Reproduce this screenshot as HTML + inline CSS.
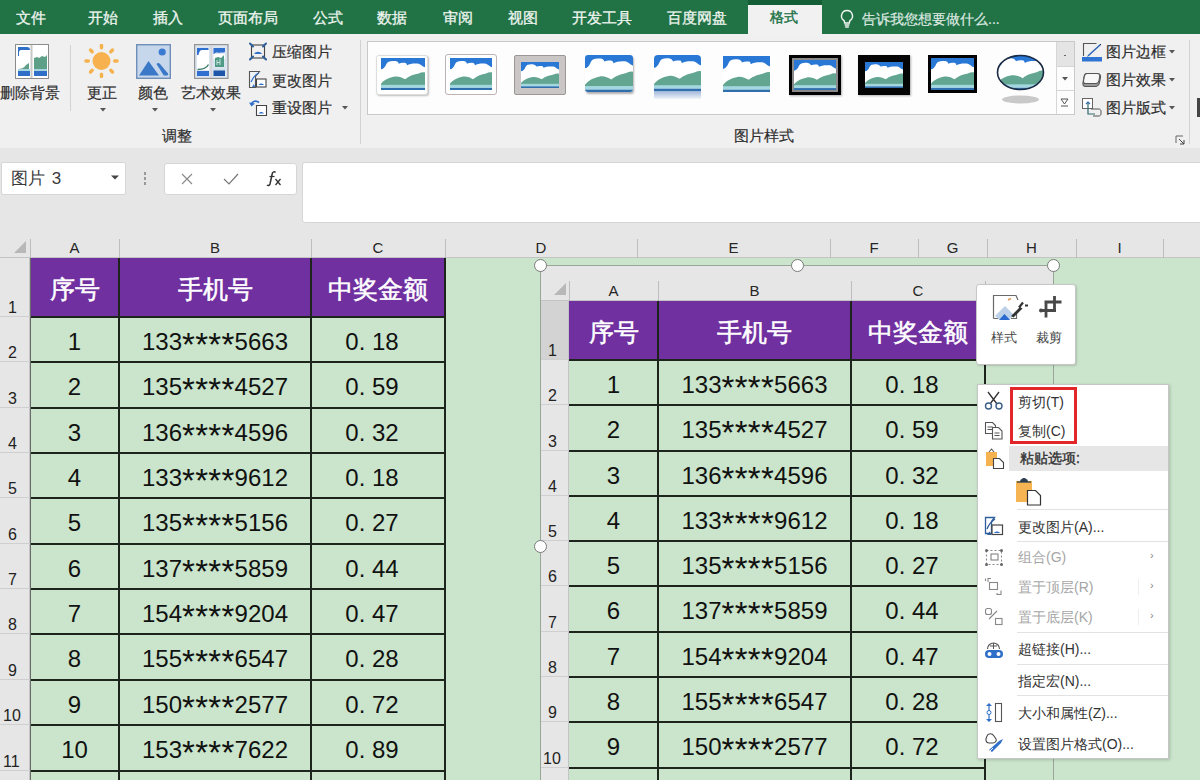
<!DOCTYPE html><html><head><meta charset="utf-8"><style>
*{box-sizing:border-box;margin:0;padding:0}
html,body{width:1200px;height:780px;overflow:hidden;background:#cae5cb;font-family:"Liberation Sans",sans-serif;position:relative}
.a{position:absolute}
.t{position:absolute;white-space:nowrap;line-height:1}
.tab{position:absolute;top:10px;font-size:14.5px;-webkit-text-stroke:0.3px #eef5ef;color:#eef5ef;line-height:16px;white-space:nowrap}
.rl{position:absolute;font-size:14.5px;color:#2e2e2e;-webkit-text-stroke:0.2px #2e2e2e;line-height:16px;white-space:nowrap}
.vsep{position:absolute;width:1px;background:#d2d2d2}
.ch{position:absolute;height:21px;font-size:15px;color:#262626;text-align:center;line-height:21px}
.chs{position:absolute;width:1px;background:#bdbdbd}
.rn{position:absolute;font-size:16px;color:#222;line-height:16px}
.hl{position:absolute;background:#1c241c}
.hc{position:absolute;color:#fff;font-size:25px;-webkit-text-stroke:0.5px #fff;text-align:center;white-space:nowrap}
.dc{position:absolute;color:#111;font-size:24px;text-align:center;white-space:nowrap}
.mi{position:absolute;left:1018px;font-size:14px;color:#333;line-height:16px;white-space:nowrap}
.dis{color:#a6a6a6}
.ast{font-size:33px;vertical-align:-6px;letter-spacing:0.3px;line-height:0}
</style></head><body>
<div class="a" style="left:0;top:0;width:1200px;height:34px;background:#217346"></div>
<div class="tab" style="left:16px">文件</div>
<div class="tab" style="left:88px">开始</div>
<div class="tab" style="left:153px">插入</div>
<div class="tab" style="left:218px">页面布局</div>
<div class="tab" style="left:313px">公式</div>
<div class="tab" style="left:377px">数据</div>
<div class="tab" style="left:443px">审阅</div>
<div class="tab" style="left:508px">视图</div>
<div class="tab" style="left:572px">开发工具</div>
<div class="tab" style="left:667px">百度网盘</div>
<div class="a" style="left:748px;top:0;width:74px;height:5px;background:#145e35"></div>
<div class="a" style="left:748px;top:5px;width:74px;height:29px;background:#f1f1f1"></div>
<div class="tab" style="left:770px;top:9px;font-size:14px;color:#217346;-webkit-text-stroke:0.4px #217346">格式</div>
<svg class="a" style="left:838px;top:9px" width="18" height="20" viewBox="0 0 18 20"><path d="M9 1.5a5.5 5.5 0 0 0-3.3 9.9c.6.5.9 1.2.9 2V14h4.8v-.6c0-.8.3-1.5.9-2A5.5 5.5 0 0 0 9 1.5z" fill="none" stroke="#f2f6f2" stroke-width="1.4"/><path d="M6.6 16h4.8M7.2 18h3.6" stroke="#f2f6f2" stroke-width="1.4"/></svg>
<div class="tab" style="left:862px;font-size:14px;top:11px;color:#dde9e0;-webkit-text-stroke:0.2px #dde9e0">告诉我您想要做什么...</div>
<div class="a" style="left:0;top:34px;width:1200px;height:115px;background:#f0f0f1;border-bottom:1px solid #d8d8d8"></div>
<svg class="a" style="left:15px;top:44px" width="34" height="35" viewBox="0 0 34 35"><rect x=".5" y=".5" width="33" height="34" fill="#fff" stroke="#8c8c8c"/><rect x="15.5" y="1" width="2" height="33" fill="#c8c8c8"/><path d="M3 3h9c2 0 3 1 3 3v0H6c-1 0-2 1-2 2v4H3z" fill="#2f6fc8"/><path d="M3 25c3 0 6-1 8-4l3-2v6H3z" fill="#5e9f88"/><rect x="3" y="25" width="12" height="2" fill="#a8d4e0"/><rect x="3" y="27" width="12" height="5" fill="#2f6fc8"/><path d="M19 14l3-1 2 1 3-2 3 1 2-2v14H19z" fill="#5e9f88"/><rect x="19" y="25" width="13" height="2" fill="#a8d4e0"/><rect x="19" y="27" width="13" height="5" fill="#2f6fc8"/></svg>
<div class="rl" style="left:-2px;top:85px;width:64px;text-align:center">删除背景</div>
<div class="vsep" style="left:70px;top:45px;height:66px"></div>
<svg class="a" style="left:84px;top:44px" width="36" height="36" viewBox="0 0 36 36"><circle cx="17.5" cy="17" r="9" fill="#f7b14f"/><path d="M30.7 17.0L33.1 17.0" stroke="#f5b24c" stroke-width="3.4" stroke-linecap="round"/><path d="M26.8 26.3L28.5 28.0" stroke="#f5b24c" stroke-width="3.4" stroke-linecap="round"/><path d="M17.5 30.2L17.5 32.6" stroke="#f5b24c" stroke-width="3.4" stroke-linecap="round"/><path d="M8.2 26.3L6.5 28.0" stroke="#f5b24c" stroke-width="3.4" stroke-linecap="round"/><path d="M4.3 17.0L1.9 17.0" stroke="#f5b24c" stroke-width="3.4" stroke-linecap="round"/><path d="M8.2 7.7L6.5 6.0" stroke="#f5b24c" stroke-width="3.4" stroke-linecap="round"/><path d="M17.5 3.8L17.5 1.4" stroke="#f5b24c" stroke-width="3.4" stroke-linecap="round"/><path d="M26.8 7.7L28.5 6.0" stroke="#f5b24c" stroke-width="3.4" stroke-linecap="round"/></svg>
<div class="rl" style="left:82px;top:85px;width:40px;text-align:center">更正</div>
<svg class="a" style="left:100px;top:108px" width="7" height="4"><path d="M0 0h6l-3 3.5z" fill="#555"/></svg>
<svg class="a" style="left:136px;top:44px" width="35" height="35" viewBox="0 0 35 35"><rect x=".7" y=".7" width="33.6" height="33.6" fill="#c6d7ec" stroke="#6f8fba" stroke-width="1.4"/><circle cx="26.2" cy="8" r="3.6" fill="#3a7ad0"/><path d="M3 31.5L12.5 17 23 31.5z" fill="#3a78c8"/><path d="M20.5 20c1-1.3 2.3-1.3 3.3-.3l8 9.5c.8 1 .4 2.3-1 2.3h-3z" fill="#3a78c8"/></svg>
<div class="rl" style="left:133px;top:85px;width:40px;text-align:center">颜色</div>
<svg class="a" style="left:152px;top:108px" width="7" height="4"><path d="M0 0h6l-3 3.5z" fill="#555"/></svg>
<svg class="a" style="left:194px;top:44px" width="35" height="35" viewBox="0 0 35 35"><rect x=".6" y=".6" width="33.4" height="33.8" fill="#dbe5f0" stroke="#939393" stroke-width="1.2"/><rect x="16.3" y="1" width="2" height="33" fill="#d3d3d8"/><rect x="3" y="4" width="12" height="22" fill="#fff"/><path d="M3 4h11.5v2H8C6 6 5 8 4.5 11H3z" fill="#2e6fd0"/><path d="M3.5 25.5c5 0 9-1 11-5" fill="none" stroke="#3f7f70" stroke-width="1.4"/><rect x="3" y="27" width="12" height="5" fill="#2f6fd0"/><path d="M19.5 4h11.5v4c-2 1-4 0-6 1-2-1-4 0-5.5 1z" fill="#2f6fd0"/><rect x="19.5" y="10" width="11.5" height="5" fill="#fff"/><path d="M21 14l3-1 3 1 3-3v12H21z" fill="#4f9a86"/><path d="M23 16v5M26 15v6M23 18.5h3" stroke="#c8e6dc" stroke-width="1"/><rect x="19.5" y="24.5" width="11.5" height="2" fill="#cfe0ea"/><rect x="19.5" y="26.5" width="11.5" height="5.5" fill="#1d55a8"/></svg>
<div class="rl" style="left:179px;top:85px;width:64px;text-align:center">艺术效果</div>
<svg class="a" style="left:210px;top:108px" width="7" height="4"><path d="M0 0h6l-3 3.5z" fill="#555"/></svg>
<div class="rl" style="left:157px;top:128px;width:40px;text-align:center">调整</div>
<svg class="a" style="left:248px;top:42px" width="20" height="19" viewBox="0 0 20 19"><rect x="3.5" y="3" width="13" height="13" fill="none" stroke="#444" stroke-width="1.1"/><path d="M2 1.5l3 3M18 1.5l-3 3M2 17.5l3-3M18 17.5l-3-3" stroke="#2f5f9a" stroke-width="2" stroke-linecap="round"/><path d="M6 12c2-3 6-3 8 0z" fill="#2f6fc8"/></svg>
<div class="rl" style="left:272px;top:44px;">压缩图片</div>
<svg class="a" style="left:248px;top:70px" width="20" height="19" viewBox="0 0 20 19"><path d="M1.5 1.5h10l-4 5v11h-6z" fill="#eef3f8" stroke="#555" stroke-width="1.1"/><path d="M3 12c2-5 5-8 8-9" fill="none" stroke="#2f6fc8" stroke-width="1.2"/><rect x="8.5" y="9" width="9.5" height="8" fill="#fff" stroke="#444" stroke-width="1.1"/><path d="M10.5 15c1.5-2 4-2 5.5 0z" fill="#2f6fc8"/><path d="M4 17l2-3 1 3z" fill="#2f6fc8"/></svg>
<div class="rl" style="left:272px;top:73px;">更改图片</div>
<svg class="a" style="left:248px;top:99px" width="20" height="18" viewBox="0 0 20 18"><path d="M8.5 6.5h10v10h-10z" fill="#fff" stroke="#444" stroke-width="1.1"/><path d="M10.5 14.5c1.5-2 4-2 5.5 0z" fill="#2f6fc8"/><path d="M11 3.5C8 1 4.5 2 3 5.5" fill="none" stroke="#2f6fc8" stroke-width="1.8"/><path d="M1 3.5l2.5 4 3.5-3z" fill="#2f6fc8"/></svg>
<div class="rl" style="left:272px;top:100px;">重设图片</div>
<svg class="a" style="left:342px;top:106px" width="7" height="4"><path d="M0 0h6l-3 3.5z" fill="#555"/></svg>
<div class="vsep" style="left:360px;top:40px;height:104px"></div>
<div class="a" style="left:367px;top:41px;width:708px;height:74px;background:#fdfdfd;border:1px solid #c9c9c9"></div>
<div class="a" style="left:1056px;top:42px;width:18px;height:24px;background:#e4e4e4;border-left:1px solid #d6d6d6"></div>
<div class="a" style="left:1056px;top:66px;width:18px;height:48px;border-left:1px solid #d6d6d6;border-top:1px solid #d6d6d6"></div>
<div class="a" style="left:1056px;top:90px;width:18px;height:1px;background:#d6d6d6"></div>
<div class="a" style="left:1064px;top:55px;width:2px;height:1px;background:#666"></div>
<svg class="a" style="left:1062px;top:77px" width="7" height="4"><path d="M0 0h6l-3 3.5z" fill="#555"/></svg>
<svg class="a" style="left:1060px;top:98px" width="10" height="9"><path d="M1 1h7l-3.5 5z" fill="none" stroke="#555"/><path d="M1 8h7" stroke="#555"/></svg>
<svg width="0" height="0" style="position:absolute"><defs><symbol id="pic" viewBox="0 0 42 31" preserveAspectRatio="none"><rect width="42" height="31" fill="#fff"/><rect width="42" height="11" fill="#2a78d6"/><path d="M0 11.5C2 10.5 4 9 5 6 6 3 10 2.5 14 3c2 .5 2.5 1.5 3 2.5 2-1 5-1 7-.5l1 2c2-1.5 7-2 11-1.5 2 .5 3 2.5 6 3.5V20H0z" fill="#fff"/><path d="M0 25c3-4 8-6 13-7 4-.5 7 1 10 2.5 4-3.5 9-4.5 13-5.5 2-1 4-1.5 6-1V27H0z" fill="#62a590"/><rect y="26" width="42" height="3" fill="#a3d7e0"/><rect y="29" width="42" height="2" fill="#2f6fae"/></symbol></defs></svg>
<div class="a" style="left:376px;top:55px;width:52px;height:40px;background:#fff;border:1px solid #ddd;border-radius:3px;box-shadow:1px 1px 2px rgba(0,0,0,.25)"></div>
<svg class="a" style="left:381px;top:58px;" width="44" height="32"><use href="#pic" width="44" height="32"/></svg>
<div class="a" style="left:445px;top:54px;width:52px;height:41px;background:#fff;border:1px solid #bdb3b3;border-radius:3px"></div>
<svg class="a" style="left:450px;top:58px;" width="42" height="32"><use href="#pic" width="42" height="32"/></svg>
<div class="a" style="left:514px;top:55px;width:52px;height:40px;background:#cbc6c6;border:1px solid #9c9696;border-radius:2px"></div>
<svg class="a" style="left:521px;top:62px;" width="38" height="26"><use href="#pic" width="38" height="26"/></svg>
<svg class="a" style="left:585px;top:55px;border-radius:3px;box-shadow:1px 2px 2px rgba(0,0,0,.3)" width="48" height="37"><use href="#pic" width="48" height="37"/></svg>
<svg class="a" style="left:654px;top:55px;border-radius:4px 4px 0 0" width="47" height="36"><use href="#pic" width="47" height="36"/></svg>
<div class="a" style="left:654px;top:91px;width:47px;height:8px;background:linear-gradient(#9fb6da,#f0f3f8)"></div>
<svg class="a" style="left:723px;top:56px" width="47" height="36"><use href="#pic" width="47" height="36"/></svg>
<div class="a" style="left:789px;top:55px;width:52px;height:40px;background:#000;box-shadow:1px 1px 2px rgba(0,0,0,.3)"></div>
<div class="a" style="left:792px;top:58px;width:46px;height:34px;background:#8a8a8a"></div>
<svg class="a" style="left:794px;top:60px;" width="42" height="30"><use href="#pic" width="42" height="30"/></svg>
<div class="a" style="left:858px;top:55px;width:52px;height:40px;background:#050505;box-shadow:1px 1px 2px rgba(0,0,0,.3)"></div>
<svg class="a" style="left:865px;top:62px;" width="38" height="26"><use href="#pic" width="38" height="26"/></svg>
<div class="a" style="left:928px;top:55px;width:49px;height:38px;background:#000"></div>
<svg class="a" style="left:931px;top:58px;" width="43" height="32"><use href="#pic" width="43" height="32"/></svg>
<svg class="a" style="left:996px;top:54px" width="50" height="51" viewBox="0 0 50 51"><defs><clipPath id="ov"><ellipse cx="24.5" cy="18.5" rx="23" ry="17"/></clipPath></defs><g clip-path="url(#ov)"><use href="#pic" x="1" y="1" width="47" height="35"/></g><ellipse cx="24.5" cy="18.5" rx="23" ry="17" fill="none" stroke="#1b2a44" stroke-width="1.6"/><ellipse cx="24.5" cy="45.5" rx="18.5" ry="4" fill="#c9c9c9"/></svg>
<div class="rl" style="left:729px;top:128px;width:70px;text-align:center">图片样式</div>
<svg class="a" style="left:1082px;top:42px" width="21" height="20" viewBox="0 0 21 20"><path d="M1.5 14V1.5h13" fill="none" stroke="#555" stroke-width="1.1"/><path d="M18 2L6 13l-1 2 2-1L19 3z" fill="#2a64b5"/><path d="M18 2l1 1" stroke="#333"/><rect x="0" y="15" width="20" height="4.5" fill="#2f74d0"/></svg>
<div class="rl" style="left:1106px;top:44px;">图片边框</div>
<svg class="a" style="left:1169px;top:50px" width="7" height="4"><path d="M0 0h6l-3 3.5z" fill="#555"/></svg>
<svg class="a" style="left:1082px;top:72px" width="20" height="16" viewBox="0 0 20 16"><path d="M5 1.5h10c2.5 0 4 1.5 3.5 4l-1 5c-.5 2.5-2 4-4.5 4H3.5C1.5 14.5.5 13 1 11l1-6C2.5 2.5 3.5 1.5 5 1.5z" fill="#9a9a9a" stroke="#555" stroke-width="1.1"/><path d="M5 1.5h10c2 0 3 1 2.7 3l-.7 4c-.3 2-1.5 3-3.5 3H3.5c-1.5 0-2.2-1-2-2.5l.8-4.5C2.6 2.5 3.5 1.5 5 1.5z" fill="#f8f8f8" stroke="#555" stroke-width="1.1"/></svg>
<div class="rl" style="left:1106px;top:72px;">图片效果</div>
<svg class="a" style="left:1169px;top:78px" width="7" height="4"><path d="M0 0h6l-3 3.5z" fill="#555"/></svg>
<svg class="a" style="left:1082px;top:98px" width="20" height="19" viewBox="0 0 20 19"><rect x=".5" y=".5" width="10" height="10" fill="#fff" stroke="#666"/><path d="M4 6l2-2 2 2" fill="none" stroke="#2f6fc8" stroke-width="1.2"/><path d="M6 4v12h7" fill="none" stroke="#2f6a6a" stroke-width="1.2"/><path d="M9 11h8c1 0 2 1 2 2v3c0 1-1 2-2 2h-6" fill="none" stroke="#555"/></svg>
<div class="rl" style="left:1106px;top:100px;">图片版式</div>
<svg class="a" style="left:1169px;top:106px" width="7" height="4"><path d="M0 0h6l-3 3.5z" fill="#555"/></svg>
<svg class="a" style="left:1175px;top:135px" width="10" height="10"><path d="M1 8V1h7" fill="none" stroke="#666"/><path d="M4 4l5 5M9 5v4H5" fill="none" stroke="#444"/></svg>
<div class="vsep" style="left:1189px;top:40px;height:104px"></div>
<div class="a" style="left:1197px;top:98px;width:3px;height:19px;background:#444"></div>
<div class="a" style="left:0;top:148px;width:1200px;height:89px;background:#e6e6e6"></div>
<div class="a" style="left:1px;top:162px;width:125px;height:33px;background:#fff;border:1px solid #d6d6d6;border-radius:2px"></div>
<div class="t" style="left:11px;top:170px;font-size:17px;color:#3a3a3a;word-spacing:2px">图片 3</div>
<svg class="a" style="left:111px;top:175px" width="9" height="6"><path d="M0 .5h8L4 4.5z" fill="#444"/></svg>
<div class="a" style="left:144px;top:172px;width:2px;height:3px;background:#999"></div><div class="a" style="left:144px;top:177px;width:2px;height:3px;background:#999"></div><div class="a" style="left:144px;top:182px;width:2px;height:3px;background:#999"></div>
<div class="a" style="left:164px;top:163px;width:133px;height:32px;background:#fff;border:1px solid #d6d6d6;border-radius:3px"></div>
<svg class="a" style="left:179px;top:171px" width="16" height="16"><path d="M3 3l10 10M13 3L3 13" stroke="#888" stroke-width="1.1"/></svg>
<svg class="a" style="left:222px;top:171px" width="18" height="16"><path d="M2 8l5 5L16 3" fill="none" stroke="#777" stroke-width="1.2"/></svg>
<svg class="a" style="left:266px;top:170px" width="18" height="17" viewBox="0 0 18 17"><path d="M9.5 2.5c-1-1.2-2.8-.8-3.2 1L4 14c-.4 1.6-2 2-3 1" fill="none" stroke="#333" stroke-width="1.5"/><path d="M3.5 6.5h5" stroke="#333" stroke-width="1.2"/><path d="M9.5 9l5 6M14.5 9l-5 6" stroke="#333" stroke-width="1.3"/></svg>
<div class="a" style="left:302px;top:162px;width:903px;height:61px;background:#fff;border:1px solid #d6d6d6;border-radius:3px"></div>
<div class="a" style="left:0;top:237px;width:1200px;height:21px;background:#e6e6e6;border-bottom:1px solid #c4c4c4"></div>
<svg class="a" style="left:13px;top:240px" width="14" height="14"><path d="M13 1V13H1z" fill="#b8b8b8"/></svg>
<div class="chs" style="left:30px;top:239px;height:19px"></div>
<div class="ch" style="left:30px;top:237px;width:89px">A</div>
<div class="chs" style="left:119px;top:239px;height:19px"></div>
<div class="ch" style="left:119px;top:237px;width:192px">B</div>
<div class="chs" style="left:311px;top:239px;height:19px"></div>
<div class="ch" style="left:311px;top:237px;width:134px">C</div>
<div class="chs" style="left:445px;top:239px;height:19px"></div>
<div class="ch" style="left:445px;top:237px;width:192px">D</div>
<div class="chs" style="left:637px;top:239px;height:19px"></div>
<div class="ch" style="left:637px;top:237px;width:193px">E</div>
<div class="chs" style="left:830px;top:239px;height:19px"></div>
<div class="ch" style="left:830px;top:237px;width:88px">F</div>
<div class="chs" style="left:918px;top:239px;height:19px"></div>
<div class="ch" style="left:918px;top:237px;width:69px">G</div>
<div class="chs" style="left:987px;top:239px;height:19px"></div>
<div class="ch" style="left:987px;top:237px;width:89px">H</div>
<div class="chs" style="left:1076px;top:239px;height:19px"></div>
<div class="ch" style="left:1076px;top:237px;width:87px">I</div>
<div class="chs" style="left:1163px;top:239px;height:19px"></div>
<div class="a" style="left:0;top:258px;width:30px;height:522px;background:#e6e6e6;border-right:1px solid #c4c4c4"></div>
<div class="a" style="left:0;top:316px;width:30px;height:1px;background:#cfcfcf"></div>
<div class="rn" style="left:8px;top:300px">1</div>
<div class="a" style="left:0;top:361px;width:30px;height:1px;background:#cfcfcf"></div>
<div class="rn" style="left:8px;top:345px">2</div>
<div class="a" style="left:0;top:407px;width:30px;height:1px;background:#cfcfcf"></div>
<div class="rn" style="left:8px;top:391px">3</div>
<div class="a" style="left:0;top:452px;width:30px;height:1px;background:#cfcfcf"></div>
<div class="rn" style="left:8px;top:436px">4</div>
<div class="a" style="left:0;top:497px;width:30px;height:1px;background:#cfcfcf"></div>
<div class="rn" style="left:8px;top:481px">5</div>
<div class="a" style="left:0;top:543px;width:30px;height:1px;background:#cfcfcf"></div>
<div class="rn" style="left:8px;top:527px">6</div>
<div class="a" style="left:0;top:588px;width:30px;height:1px;background:#cfcfcf"></div>
<div class="rn" style="left:8px;top:572px">7</div>
<div class="a" style="left:0;top:633px;width:30px;height:1px;background:#cfcfcf"></div>
<div class="rn" style="left:8px;top:617px">8</div>
<div class="a" style="left:0;top:679px;width:30px;height:1px;background:#cfcfcf"></div>
<div class="rn" style="left:8px;top:663px">9</div>
<div class="a" style="left:0;top:724px;width:30px;height:1px;background:#cfcfcf"></div>
<div class="rn" style="left:3px;top:708px">10</div>
<div class="a" style="left:0;top:770px;width:30px;height:1px;background:#cfcfcf"></div>
<div class="rn" style="left:3px;top:754px">11</div>
<div class="a" style="left:0;top:815px;width:30px;height:1px;background:#cfcfcf"></div>
<div class="rn" style="left:3px;top:799px">12</div>
<div class="a" style="left:30px;top:258px;width:415px;height:59px;background:#7030a0"></div>
<div class="hc" style="left:30px;top:261px;width:89px;height:56px;line-height:56px">序号</div>
<div class="hc" style="left:119px;top:261px;width:192px;height:56px;line-height:56px">手机号</div>
<div class="hc" style="left:311px;top:261px;width:134px;height:56px;line-height:56px">中奖金额</div>
<div class="dc" style="left:30px;top:318px;width:89px;height:45px;line-height:47px">1</div>
<div class="dc" style="left:119px;top:318px;width:192px;height:45px;line-height:47px">133<span class="ast">****</span>5663</div>
<div class="dc" style="left:305px;top:318px;width:134px;height:45px;line-height:47px">0. 18</div>
<div class="dc" style="left:30px;top:363px;width:89px;height:46px;line-height:48px">2</div>
<div class="dc" style="left:119px;top:363px;width:192px;height:46px;line-height:48px">135<span class="ast">****</span>4527</div>
<div class="dc" style="left:305px;top:363px;width:134px;height:46px;line-height:48px">0. 59</div>
<div class="dc" style="left:30px;top:409px;width:89px;height:45px;line-height:47px">3</div>
<div class="dc" style="left:119px;top:409px;width:192px;height:45px;line-height:47px">136<span class="ast">****</span>4596</div>
<div class="dc" style="left:305px;top:409px;width:134px;height:45px;line-height:47px">0. 32</div>
<div class="dc" style="left:30px;top:454px;width:89px;height:45px;line-height:47px">4</div>
<div class="dc" style="left:119px;top:454px;width:192px;height:45px;line-height:47px">133<span class="ast">****</span>9612</div>
<div class="dc" style="left:305px;top:454px;width:134px;height:45px;line-height:47px">0. 18</div>
<div class="dc" style="left:30px;top:499px;width:89px;height:46px;line-height:48px">5</div>
<div class="dc" style="left:119px;top:499px;width:192px;height:46px;line-height:48px">135<span class="ast">****</span>5156</div>
<div class="dc" style="left:305px;top:499px;width:134px;height:46px;line-height:48px">0. 27</div>
<div class="dc" style="left:30px;top:545px;width:89px;height:45px;line-height:47px">6</div>
<div class="dc" style="left:119px;top:545px;width:192px;height:45px;line-height:47px">137<span class="ast">****</span>5859</div>
<div class="dc" style="left:305px;top:545px;width:134px;height:45px;line-height:47px">0. 44</div>
<div class="dc" style="left:30px;top:590px;width:89px;height:45px;line-height:47px">7</div>
<div class="dc" style="left:119px;top:590px;width:192px;height:45px;line-height:47px">154<span class="ast">****</span>9204</div>
<div class="dc" style="left:305px;top:590px;width:134px;height:45px;line-height:47px">0. 47</div>
<div class="dc" style="left:30px;top:635px;width:89px;height:46px;line-height:48px">8</div>
<div class="dc" style="left:119px;top:635px;width:192px;height:46px;line-height:48px">155<span class="ast">****</span>6547</div>
<div class="dc" style="left:305px;top:635px;width:134px;height:46px;line-height:48px">0. 28</div>
<div class="dc" style="left:30px;top:681px;width:89px;height:45px;line-height:47px">9</div>
<div class="dc" style="left:119px;top:681px;width:192px;height:45px;line-height:47px">150<span class="ast">****</span>2577</div>
<div class="dc" style="left:305px;top:681px;width:134px;height:45px;line-height:47px">0. 72</div>
<div class="dc" style="left:30px;top:726px;width:89px;height:46px;line-height:48px">10</div>
<div class="dc" style="left:119px;top:726px;width:192px;height:46px;line-height:48px">153<span class="ast">****</span>7622</div>
<div class="dc" style="left:305px;top:726px;width:134px;height:46px;line-height:48px">0. 89</div>
<div class="dc" style="left:30px;top:772px;width:89px;height:45px;line-height:47px"></div>
<div class="dc" style="left:119px;top:772px;width:192px;height:45px;line-height:47px"></div>
<div class="dc" style="left:305px;top:772px;width:134px;height:45px;line-height:47px"></div>
<div class="hl" style="left:30px;top:316px;width:416px;height:2px"></div>
<div class="hl" style="left:30px;top:361px;width:416px;height:2px"></div>
<div class="hl" style="left:30px;top:407px;width:416px;height:2px"></div>
<div class="hl" style="left:30px;top:452px;width:416px;height:2px"></div>
<div class="hl" style="left:30px;top:497px;width:416px;height:2px"></div>
<div class="hl" style="left:30px;top:543px;width:416px;height:2px"></div>
<div class="hl" style="left:30px;top:588px;width:416px;height:2px"></div>
<div class="hl" style="left:30px;top:633px;width:416px;height:2px"></div>
<div class="hl" style="left:30px;top:679px;width:416px;height:2px"></div>
<div class="hl" style="left:30px;top:724px;width:416px;height:2px"></div>
<div class="hl" style="left:30px;top:770px;width:416px;height:2px"></div>
<div class="hl" style="left:30px;top:815px;width:416px;height:2px"></div>
<div class="hl" style="left:118px;top:258px;width:2px;height:522px"></div>
<div class="hl" style="left:310px;top:258px;width:2px;height:522px"></div>
<div class="hl" style="left:444px;top:258px;width:2px;height:522px"></div>
<div class="a" style="left:30px;top:258px;width:1px;height:522px;background:#6a6a6a"></div>
<div class="a" style="left:540px;top:265px;width:514px;height:520px;background:#cae5cb;overflow:hidden;border-left:1px solid #9aa59a;border-top:1px solid #9aa59a;border-right:1px solid #9aa59a">
<div class="a" style="left:0;top:0;width:512px;height:35px;background:#e6e6e6;border-bottom:1px solid #c4c4c4"></div>
<svg class="a" style="left:12px;top:16px" width="14" height="14"><path d="M13 1V13H1z" fill="#b8b8b8"/></svg>
<div class="chs" style="left:28px;top:15px;height:20px"></div>
<div class="ch" style="left:28px;top:14px;width:89px">A</div>
<div class="chs" style="left:117px;top:15px;height:20px"></div>
<div class="ch" style="left:117px;top:14px;width:193px">B</div>
<div class="chs" style="left:310px;top:15px;height:20px"></div>
<div class="ch" style="left:310px;top:14px;width:134px">C</div>
<div class="chs" style="left:444px;top:15px;height:20px"></div>
<div class="a" style="left:0;top:35px;width:28px;height:500px;background:#e6e6e6;border-right:1px solid #c4c4c4"></div>
<div class="a" style="left:0;top:35px;width:27px;height:59px;background:#d3d3d3"></div>
<div class="a" style="left:0;top:93px;width:28px;height:1px;background:#cfcfcf"></div>
<div class="rn" style="left:7px;top:77px">1</div>
<div class="a" style="left:0;top:138px;width:28px;height:1px;background:#cfcfcf"></div>
<div class="rn" style="left:7px;top:122px">2</div>
<div class="a" style="left:0;top:184px;width:28px;height:1px;background:#cfcfcf"></div>
<div class="rn" style="left:7px;top:168px">3</div>
<div class="a" style="left:0;top:229px;width:28px;height:1px;background:#cfcfcf"></div>
<div class="rn" style="left:7px;top:213px">4</div>
<div class="a" style="left:0;top:274px;width:28px;height:1px;background:#cfcfcf"></div>
<div class="rn" style="left:7px;top:258px">5</div>
<div class="a" style="left:0;top:319px;width:28px;height:1px;background:#cfcfcf"></div>
<div class="rn" style="left:7px;top:303px">6</div>
<div class="a" style="left:0;top:365px;width:28px;height:1px;background:#cfcfcf"></div>
<div class="rn" style="left:7px;top:349px">7</div>
<div class="a" style="left:0;top:410px;width:28px;height:1px;background:#cfcfcf"></div>
<div class="rn" style="left:7px;top:394px">8</div>
<div class="a" style="left:0;top:455px;width:28px;height:1px;background:#cfcfcf"></div>
<div class="rn" style="left:7px;top:439px">9</div>
<div class="a" style="left:0;top:501px;width:28px;height:1px;background:#cfcfcf"></div>
<div class="rn" style="left:2px;top:485px">10</div>
<div class="a" style="left:0;top:546px;width:28px;height:1px;background:#cfcfcf"></div>
<div class="rn" style="left:2px;top:530px">11</div>
<div class="a" style="left:28px;top:35px;width:416px;height:59px;background:#7030a0"></div>
<div class="hc" style="left:28px;top:38px;width:89px;height:56px;line-height:56px">序号</div>
<div class="hc" style="left:117px;top:38px;width:193px;height:56px;line-height:56px">手机号</div>
<div class="hc" style="left:310px;top:38px;width:134px;height:56px;line-height:56px">中奖金额</div>
<div class="dc" style="left:28px;top:95px;width:89px;height:45px;line-height:47px">1</div>
<div class="dc" style="left:117px;top:95px;width:193px;height:45px;line-height:47px">133<span class="ast">****</span>5663</div>
<div class="dc" style="left:304px;top:95px;width:134px;height:45px;line-height:47px">0. 18</div>
<div class="dc" style="left:28px;top:140px;width:89px;height:46px;line-height:48px">2</div>
<div class="dc" style="left:117px;top:140px;width:193px;height:46px;line-height:48px">135<span class="ast">****</span>4527</div>
<div class="dc" style="left:304px;top:140px;width:134px;height:46px;line-height:48px">0. 59</div>
<div class="dc" style="left:28px;top:186px;width:89px;height:45px;line-height:47px">3</div>
<div class="dc" style="left:117px;top:186px;width:193px;height:45px;line-height:47px">136<span class="ast">****</span>4596</div>
<div class="dc" style="left:304px;top:186px;width:134px;height:45px;line-height:47px">0. 32</div>
<div class="dc" style="left:28px;top:231px;width:89px;height:45px;line-height:47px">4</div>
<div class="dc" style="left:117px;top:231px;width:193px;height:45px;line-height:47px">133<span class="ast">****</span>9612</div>
<div class="dc" style="left:304px;top:231px;width:134px;height:45px;line-height:47px">0. 18</div>
<div class="dc" style="left:28px;top:276px;width:89px;height:45px;line-height:47px">5</div>
<div class="dc" style="left:117px;top:276px;width:193px;height:45px;line-height:47px">135<span class="ast">****</span>5156</div>
<div class="dc" style="left:304px;top:276px;width:134px;height:45px;line-height:47px">0. 27</div>
<div class="dc" style="left:28px;top:321px;width:89px;height:46px;line-height:48px">6</div>
<div class="dc" style="left:117px;top:321px;width:193px;height:46px;line-height:48px">137<span class="ast">****</span>5859</div>
<div class="dc" style="left:304px;top:321px;width:134px;height:46px;line-height:48px">0. 44</div>
<div class="dc" style="left:28px;top:367px;width:89px;height:45px;line-height:47px">7</div>
<div class="dc" style="left:117px;top:367px;width:193px;height:45px;line-height:47px">154<span class="ast">****</span>9204</div>
<div class="dc" style="left:304px;top:367px;width:134px;height:45px;line-height:47px">0. 47</div>
<div class="dc" style="left:28px;top:412px;width:89px;height:45px;line-height:47px">8</div>
<div class="dc" style="left:117px;top:412px;width:193px;height:45px;line-height:47px">155<span class="ast">****</span>6547</div>
<div class="dc" style="left:304px;top:412px;width:134px;height:45px;line-height:47px">0. 28</div>
<div class="dc" style="left:28px;top:457px;width:89px;height:46px;line-height:48px">9</div>
<div class="dc" style="left:117px;top:457px;width:193px;height:46px;line-height:48px">150<span class="ast">****</span>2577</div>
<div class="dc" style="left:304px;top:457px;width:134px;height:46px;line-height:48px">0. 72</div>
<div class="dc" style="left:28px;top:503px;width:89px;height:45px;line-height:47px">10</div>
<div class="dc" style="left:117px;top:503px;width:193px;height:45px;line-height:47px">153<span class="ast">****</span>7622</div>
<div class="dc" style="left:304px;top:503px;width:134px;height:45px;line-height:47px">0. 89</div>
<div class="hl" style="left:28px;top:93px;width:417px;height:2px"></div>
<div class="hl" style="left:28px;top:138px;width:417px;height:2px"></div>
<div class="hl" style="left:28px;top:184px;width:417px;height:2px"></div>
<div class="hl" style="left:28px;top:229px;width:417px;height:2px"></div>
<div class="hl" style="left:28px;top:274px;width:417px;height:2px"></div>
<div class="hl" style="left:28px;top:319px;width:417px;height:2px"></div>
<div class="hl" style="left:28px;top:365px;width:417px;height:2px"></div>
<div class="hl" style="left:28px;top:410px;width:417px;height:2px"></div>
<div class="hl" style="left:28px;top:455px;width:417px;height:2px"></div>
<div class="hl" style="left:28px;top:501px;width:417px;height:2px"></div>
<div class="hl" style="left:28px;top:546px;width:417px;height:2px"></div>
<div class="hl" style="left:116px;top:35px;width:2px;height:500px"></div>
<div class="hl" style="left:309px;top:35px;width:2px;height:500px"></div>
<div class="hl" style="left:443px;top:35px;width:2px;height:500px"></div>
</div>
<div class="a" style="left:534px;top:259px;width:13px;height:13px;border-radius:50%;background:#fff;border:1px solid #7a7a7a"></div>
<div class="a" style="left:791px;top:259px;width:13px;height:13px;border-radius:50%;background:#fff;border:1px solid #7a7a7a"></div>
<div class="a" style="left:1047px;top:259px;width:13px;height:13px;border-radius:50%;background:#fff;border:1px solid #7a7a7a"></div>
<div class="a" style="left:534px;top:540px;width:13px;height:13px;border-radius:50%;background:#fff;border:1px solid #7a7a7a"></div>
<div class="a" style="left:976px;top:284px;width:100px;height:81px;background:#fff;border:1px solid #c6c6c6;border-radius:3px;box-shadow:1px 1px 2px rgba(0,0,0,.15)"></div>
<svg class="a" style="left:992px;top:294px" width="38" height="27" viewBox="0 0 38 27"><path d="M1.5 24.5V1.5h22.5l2 4.5" fill="#fff" stroke="#6a6a6a" stroke-width="1.2"/><path d="M1.5 24.5h5M19 24.5h5.5V18" fill="none" stroke="#6a6a6a" stroke-width="1.2"/><path d="M3 22l10-10 9 9-5 5H8z" fill="#bcd0e8"/><path d="M7 26l5.5-6 5.5 6z" fill="#2a6ad0"/><path d="M19 22l9-9 2.5 1.5-9 9z" fill="#333"/><path d="M27 13.5l4-5" stroke="#333" stroke-width="2.2"/><rect x="33" y="10.5" width="3" height="2" fill="#333"/><path d="M16 6l3-1.5" stroke="#e09a5a" stroke-width="1.6"/></svg>
<svg class="a" style="left:1039px;top:295px" width="24" height="24" viewBox="0 0 24 24"><path d="M15.5 1v15.5M5.5 7h17M7 7v15.5M1.5 15.5H17" fill="none" stroke="#484848" stroke-width="2.8"/><circle cx="2" cy="15.5" r="2" fill="#484848"/></svg>
<div class="t" style="left:991px;top:331px;font-size:13px;color:#444">样式</div>
<div class="t" style="left:1036px;top:331px;font-size:13px;color:#444">裁剪</div>
<div class="a" style="left:977px;top:384px;width:192px;height:375px;background:#fff;border:1px solid #c6c6c6;box-shadow:1px 1px 3px rgba(0,0,0,.18)"></div>
<div class="a" style="left:1010px;top:387px;width:67px;height:57px;border:3px solid #e3262a"></div>
<div class="a" style="left:1009px;top:446px;width:159px;height:25px;background:#e6e6e6"></div>
<div class="mi" style="top:394px;">剪切(T)</div>
<div class="mi" style="top:423px;">复制(C)</div>
<div class="mi" style="top:450px;left:1020px;-webkit-text-stroke:0.35px #333;color:#333;">粘贴选项:</div>
<div class="mi" style="top:519px;">更改图片(A)...</div>
<div class="mi dis" style="top:549px;">组合(G)</div>
<div class="mi dis" style="top:579px;">置于顶层(R)</div>
<div class="mi dis" style="top:609px;">置于底层(K)</div>
<div class="mi" style="top:641px;">超链接(H)...</div>
<div class="mi" style="top:673px;">指定宏(N)...</div>
<div class="mi" style="top:705px;">大小和属性(Z)...</div>
<div class="mi" style="top:736px;">设置图片格式(O)...</div>
<svg class="a" style="left:984px;top:391px" width="20" height="19" viewBox="0 0 20 19"><path d="M4 1l9 12M15 1L6 13" stroke="#333" stroke-width="1.3"/><circle cx="4.5" cy="15" r="3" fill="none" stroke="#3a5f86" stroke-width="1.4"/><circle cx="15" cy="15" r="3" fill="none" stroke="#3a5f86" stroke-width="1.4"/></svg>
<svg class="a" style="left:984px;top:421px" width="20" height="19" viewBox="0 0 20 19"><path d="M1.5 1.5h7l3 3v8h-10z" fill="#fff" stroke="#555" stroke-width="1.1"/><path d="M3.5 6h5M3.5 8.5h5" stroke="#555"/><path d="M8.5 6.5h6l3.5 3.5v8h-9.5z" fill="#fff" stroke="#555" stroke-width="1.1"/><path d="M10.5 12h5M10.5 14.5h5" stroke="#555"/></svg>
<svg class="a" style="left:985px;top:448px" width="20" height="21" viewBox="0 0 20 21"><rect x="1" y="4" width="11" height="14" fill="#f5b24f"/><path d="M4 4l2.5-3 2.5 3" fill="none" stroke="#555" stroke-width="1.1"/><path d="M8.5 10.5h6l4 4v6h-10z" fill="#fff" stroke="#444" stroke-width="1.1"/></svg>
<svg class="a" style="left:1015px;top:476px" width="28" height="30" viewBox="0 0 28 30"><rect x="1" y="5" width="16" height="21" fill="#f6b552"/><path d="M5 6c0-3 3-4 4-4s4 1 4 4z" fill="#2e3d50"/><path d="M2 6h14" stroke="#2e3d50" stroke-width="1.3"/><path d="M12.5 14.5h8l5 5v9.5h-13z" fill="#fff" stroke="#333" stroke-width="1.2"/></svg>
<svg class="a" style="left:984px;top:516px" width="20" height="21" viewBox="0 0 20 21"><path d="M1.5 1.5h9l-3 4v12h-6z" fill="#fff" stroke="#2f5f9a" stroke-width="1.3"/><path d="M3 13c2-5 5-8 8-10" fill="none" stroke="#2f5f9a" stroke-width="1.3"/><rect x="8" y="9" width="10.5" height="9.5" fill="#fff" stroke="#444" stroke-width="1.2"/><path d="M10 17c1.5-2 4.5-2 6 0z" fill="#2f6fc8"/><path d="M3 19l2.5-3.5 2 3.5z" fill="#2f5f9a"/></svg>
<svg class="a" style="left:984px;top:548px" width="20" height="19" viewBox="0 0 20 19"><rect x="2.5" y="2.5" width="15" height="14" fill="none" stroke="#888" stroke-width="1.1" stroke-dasharray="2 2"/><circle cx="2.5" cy="2.5" r="1.5" fill="#666"/><circle cx="17.5" cy="2.5" r="1.5" fill="#666"/><circle cx="2.5" cy="16.5" r="1.5" fill="#666"/><circle cx="17.5" cy="16.5" r="1.5" fill="#666"/><rect x="7" y="6" width="7" height="6" fill="none" stroke="#777"/></svg>
<svg class="a" style="left:984px;top:577px" width="20" height="19" viewBox="0 0 20 19"><path d="M4 5V1.5h3M1.5 4V1.5" fill="none" stroke="#888" stroke-width="1.1"/><rect x="5.5" y="5.5" width="8" height="7" fill="#fff" stroke="#888" stroke-width="1.1"/><path d="M13 16v1.5h4v-4" fill="none" stroke="#888" stroke-width="1.1"/></svg>
<svg class="a" style="left:984px;top:607px" width="20" height="19" viewBox="0 0 20 19"><rect x="1.5" y="1.5" width="6" height="6" rx="2" fill="none" stroke="#888" stroke-width="1.1"/><path d="M5 12l8-8" stroke="#888" stroke-width="1.1"/><rect x="11.5" y="11.5" width="6.5" height="6" fill="none" stroke="#888" stroke-width="1.1"/></svg>
<svg class="a" style="left:984px;top:639px" width="20" height="20" viewBox="0 0 20 20"><path d="M3.5 10a6 6 0 1 1 12 0" fill="none" stroke="#555" stroke-width="1.1"/><path d="M9.5 4v6M6 7h7" stroke="#555"/><rect x="1" y="11" width="18" height="8" rx="4" fill="#2f6fc8"/><circle cx="5.5" cy="15" r="2" fill="#fff"/><circle cx="14.5" cy="15" r="2" fill="#fff"/></svg>
<svg class="a" style="left:984px;top:702px" width="20" height="21" viewBox="0 0 20 21"><rect x="11.5" y="1.5" width="6" height="18" fill="#fff" stroke="#555" stroke-width="1.1"/><path d="M2 4l3-3 3 3zM2 17l3 3 3-3z" fill="#2f6fc8"/><path d="M5 4v13" stroke="#2f6fc8" stroke-width="1.2"/><circle cx="5" cy="10.5" r="2" fill="#fff" stroke="#2f6fc8"/></svg>
<svg class="a" style="left:984px;top:732px" width="21" height="20" viewBox="0 0 21 20"><path d="M3 4c1-3 5-3 7 0l2 3c1 2-1 4-3 4H5C2 11 1 8 3 4z" fill="#fff" stroke="#444" stroke-width="1.1"/><path d="M5 18l10-9 4-2-2 4-9 9z" fill="#2f6fc8"/><path d="M6 19l3-3" stroke="#fff"/></svg>
<div class="t" style="left:1150px;top:550px;font-size:11px;color:#888">&#x203A;</div>
<div class="t" style="left:1150px;top:580px;font-size:11px;color:#888">&#x203A;</div>
<div class="t" style="left:1150px;top:610px;font-size:11px;color:#888">&#x203A;</div>
<div class="a" style="left:1138px;top:579px;width:1px;height:16px;background:#eee"></div>
<div class="a" style="left:1138px;top:609px;width:1px;height:16px;background:#eee"></div>
<div class="a" style="left:1017px;top:509px;width:151px;height:1px;background:#e2e2e2"></div>
<div class="a" style="left:1017px;top:541px;width:151px;height:1px;background:#e2e2e2"></div>
<div class="a" style="left:1017px;top:632px;width:151px;height:1px;background:#e2e2e2"></div>
<div class="a" style="left:1017px;top:664px;width:151px;height:1px;background:#e2e2e2"></div>
<div class="a" style="left:1017px;top:695px;width:151px;height:1px;background:#e2e2e2"></div>
</body></html>
